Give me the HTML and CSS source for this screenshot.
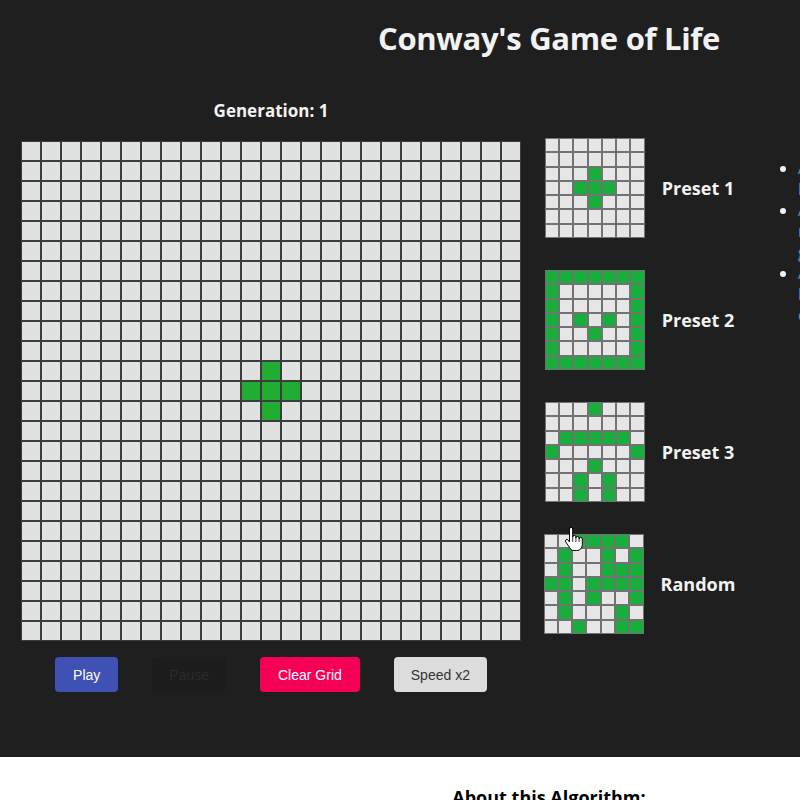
FILE: index.html
```html
<!DOCTYPE html>
<html lang="en">
<head>
<meta charset="utf-8">
<title>Conway's Game of Life</title>
<link rel="stylesheet" href="styles.css">
</head>
<body>
<div class="page">
  <div class="stage">
    <h1 class="title">Conway's Game of Life</h1>
    <div class="main">
      <section class="board-col">
        <h3 class="generation">Generation: 1</h3>
        <div class="board" id="board"></div>
        <div class="controls">
          <button class="btn btn-play">Play</button>
          <button class="btn btn-pause" disabled>Pause</button>
          <button class="btn btn-clear">Clear Grid</button>
          <button class="btn btn-speed">Speed x2</button>
        </div>
      </section>
      <aside class="presets">
        <div class="preset">
          <div class="thumb" data-pattern="0000000,0000000,0001000,0011100,0001000,0000000,0000000"></div>
          <span class="preset-label">Preset 1</span>
        </div>
        <div class="preset">
          <div class="thumb" data-pattern="1111111,1000001,1000001,1010101,1001001,1000001,1111111"></div>
          <span class="preset-label">Preset 2</span>
        </div>
        <div class="preset">
          <div class="thumb" data-pattern="0001000,0000000,0111110,1000001,0001000,0010100,0010100"></div>
          <span class="preset-label">Preset 3</span>
        </div>
        <div class="preset">
          <div class="thumb" data-pattern="0011110,0100101,0100111,1101111,0101001,0100010,0010011"></div>
          <span class="preset-label">Random</span>
        </div>
      </aside>
      <ul class="rules">
        <li><a href="#">Any live cell with fewer than two live neighbours dies.</a></li>
        <li><a href="#">Any live cell with two or three live neighbours lives on to the next generation.</a></li>
        <li><a href="#">Any dead cell with exactly three live neighbours becomes a live cell.</a></li>
      </ul>
    </div>
    <svg class="cursor" width="20" height="25" viewBox="0 0 20 25" aria-hidden="true">
      <path d="M5.5,2 a1.6,1.6 0 0 1 3.2,0 V10 a1.6,1.6 0 0 1 3.2,0 V11 a1.6,1.6 0 0 1 3.2,0 V12 a1.6,1.6 0 0 1 3.2,0 V17.5 c0,3.5 -2.2,6 -5.5,6 H10 c-2.2,0 -3.3,-1 -4.4,-3 L1.8,15 a1.5,1.5 0 0 1 2.3,-2 L5.5,15 Z" fill="#fff" stroke="#000" stroke-width="1" stroke-linejoin="round"/>
      <path d="M8.7,10 V15 M11.9,11 V15 M15.1,12 V15" stroke="#000" stroke-width="0.8" fill="none"/>
    </svg>
  </div>
  <section class="about">
    <h2 class="about-title">About this Algorithm:</h2>
  </section>
</div>
<script src="script.js"></script>
</body>
</html>
```

FILE: styles.css
```css
html, body {
  margin: 0;
  padding: 0;
  overflow: hidden;
  background: #ffffff;
}

body {
  font-family: "Open Sans", "Noto Sans", sans-serif;
}

.page {
  width: 1098px;
}

.stage {
  position: relative;
  background: #1f1f1f;
  color: #f2f2f2;
  padding: 19px 0 65px;
}

.title {
  margin: 0;
  font-size: 31px;
  line-height: 38px;
  letter-spacing: -0.3px;
  font-weight: 700;
  text-align: center;
  color: #f2f2f2;
}

.main {
  display: flex;
  align-items: flex-start;
  padding-left: 21px;
  margin-top: 43px;
}

.board-col {
  width: 500px;
  display: flex;
  flex-direction: column;
  align-items: center;
}

.generation {
  margin: 0 0 19px;
  font-size: 17px;
  line-height: 22px;
  font-weight: 700;
  color: #f2f2f2;
}

.board {
  display: grid;
  grid-template-columns: repeat(25, 20px);
  grid-template-rows: repeat(25, 20px);
  width: 500px;
}

.cell {
  box-sizing: border-box;
  border: 1px solid #3c3c3c;
  background: #e0e2e1;
}

.cell.alive {
  background: #21ad33;
}

.controls {
  display: flex;
  justify-content: center;
  gap: 34px;
  margin-top: 16px;
}

.btn {
  height: 35px;
  padding: 0 17px;
  border: none;
  border-radius: 4px;
  font-family: "Liberation Sans", Arial, sans-serif;
  font-size: 14px;
  cursor: pointer;
}

.btn-play {
  background: #3f51b5;
  color: #ffffff;
  padding: 0 18px;
}

.btn-pause {
  background: #1c1c1c;
  color: #2b2b2b;
}

.btn-clear {
  background: #f50057;
  color: #ffffff;
  padding: 0 18px;
}

.btn-speed {
  background: #dcdcdc;
  color: #333333;
}

.presets {
  width: 237px;
  display: flex;
  flex-direction: column;
  gap: 32px;
  margin-top: 38px;
}

.preset {
  display: flex;
  align-items: center;
  justify-content: center;
  gap: 17px;
}

.thumb {
  display: grid;
  grid-template-columns: repeat(7, 1fr);
  grid-template-rows: repeat(7, 1fr);
  width: 100px;
  height: 100px;
}

.mini {
  box-sizing: border-box;
  border: 1px solid #727272;
  background: #e6e6e6;
}

.mini.alive {
  background: #17ae3b;
}

.preset-label {
  font-size: 18px;
  font-weight: 700;
  color: #f2f2f2;
}

.rules {
  margin: 58px 0 0;
  padding-left: 40px;
  width: 260px;
  font-size: 16px;
  line-height: 21px;
  color: #f2f2f2;
}

.rules a {
  color: #4a90d9;
  text-decoration: none;
}

.cursor {
  position: absolute;
  left: 564px;
  top: 527px;
}

.about {
  background: #ffffff;
  padding-top: 27px;
  height: 80px;
}

.about-title {
  margin: 0;
  text-align: center;
  font-size: 18px;
  line-height: 26px;
  font-weight: 700;
  color: #000000;
}
```

FILE: script.js
```js
(function () {
  var board = document.getElementById('board');
  var alive = { '11,12': 1, '12,11': 1, '12,12': 1, '12,13': 1, '13,12': 1 };
  for (var r = 0; r < 25; r++) {
    for (var c = 0; c < 25; c++) {
      var cell = document.createElement('div');
      cell.className = 'cell' + (alive[r + ',' + c] ? ' alive' : '');
      board.appendChild(cell);
    }
  }
  var thumbs = document.querySelectorAll('.thumb');
  thumbs.forEach(function (t) {
    var rows = t.getAttribute('data-pattern').split(',');
    rows.forEach(function (row) {
      for (var i = 0; i < row.length; i++) {
        var m = document.createElement('div');
        m.className = 'mini' + (row[i] === '1' ? ' alive' : '');
        t.appendChild(m);
      }
    });
  });
})();
```
